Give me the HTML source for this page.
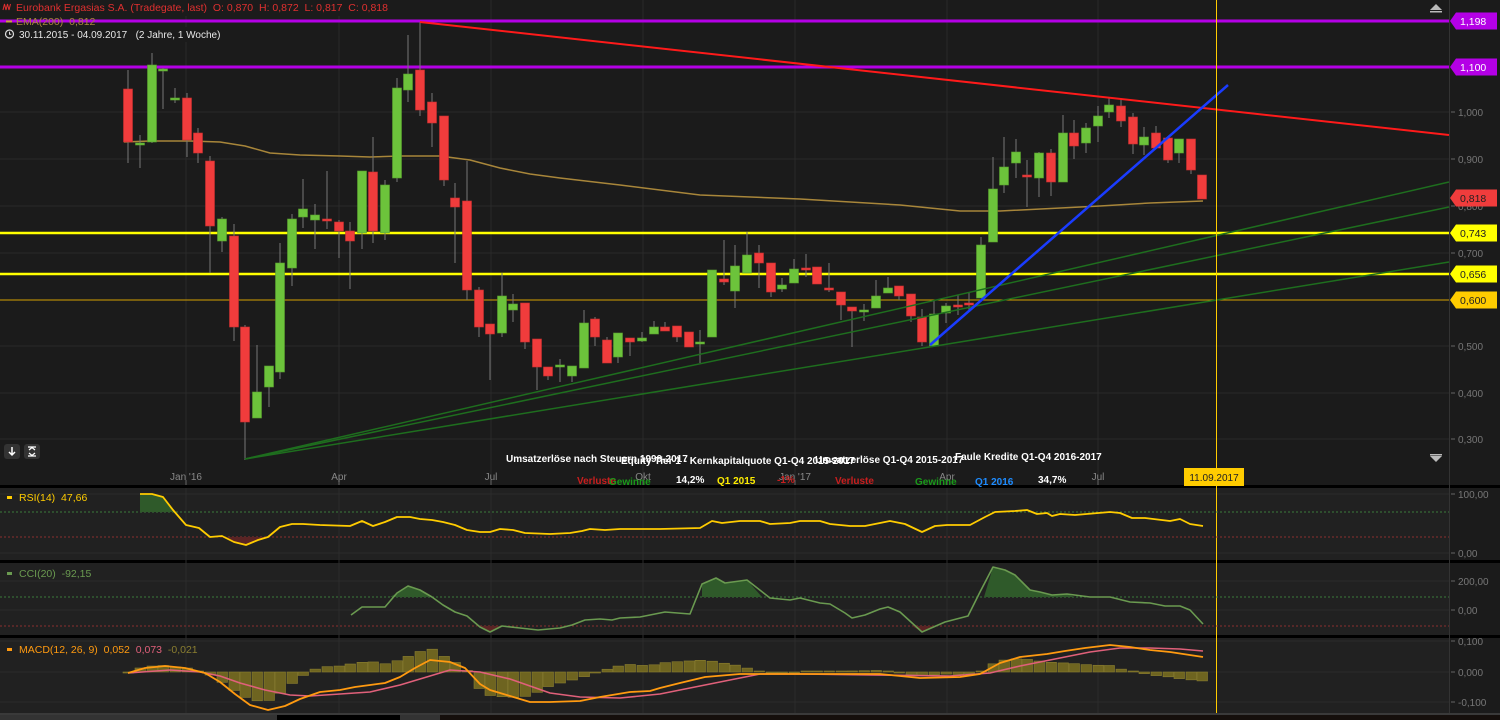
<!DOCTYPE html>
<html><head><meta charset="utf-8"><style>
html,body{margin:0;padding:0;background:#1b1b1b;width:1500px;height:720px;overflow:hidden}
svg{display:block}
text{font-family:"Liberation Sans",Arial,sans-serif}
</style></head><body>
<svg id="s" width="1500" height="720" xmlns="http://www.w3.org/2000/svg"></svg>
<script>
var o='';
function A(s){o+=s;}
function pl(pts,col,w,extra){A('<polyline fill="none" stroke="'+col+'" stroke-width="'+w+'" stroke-linejoin="round" '+(extra||'')+' points="'+pts.map(p=>p.join(',')).join(' ')+'"/>');}
function ln(x1,y1,x2,y2,c,w,e){A('<line x1="'+x1+'" y1="'+y1+'" x2="'+x2+'" y2="'+y2+'" stroke="'+c+'" stroke-width="'+w+'" '+(e||'')+'/>');}
function tx(x,y,t,c,sz,extra){A('<text x="'+x+'" y="'+y+'" fill="'+c+'" font-size="'+(sz||10)+'" '+(extra||'')+'>'+t+'</text>');}
A('<rect x="0" y="0" width="1500" height="720" fill="#1b1b1b"/>');
A('<rect x="0" y="488" width="1449" height="226" fill="#212121"/>');
A('<rect x="0" y="485" width="1500" height="3" fill="#000"/>');
A('<rect x="0" y="560" width="1500" height="3" fill="#000"/>');
A('<rect x="0" y="635" width="1500" height="3" fill="#000"/>');
A('<rect x="0" y="713" width="1500" height="2" fill="#3a3a3a"/>');
A('<rect x="0" y="715" width="277" height="5" fill="#333"/><rect x="277" y="715" width="123" height="5" fill="#000"/><rect x="400" y="715" width="40" height="5" fill="#333"/><rect x="440" y="715" width="1060" height="5" fill="#150f0c"/>');
A('<rect x="1449" y="0" width="1" height="713" fill="#333"/>');
[112,159,206,253,300,346,393,439].forEach(y=>ln(0,y,1449,y,'#2a2a2a',1));
[186,339,491,643,795,947,1098].forEach(x=>{ln(x,0,x,485,'#2a2a2a',1);ln(x,488,x,713,'#2c2c2c',1);ln(x,480,x,485,'#666',1);});
[494,553,581,610,641,672,702].forEach(y=>ln(0,y,1449,y,'#2c2c2c',1));
[['1,000',112],['0,900',159],['0,800',206],['0,700',253],['0,500',346],['0,400',393],['0,300',439]].forEach(a=>{ln(1451,a[1],1455,a[1],'#666',1);tx(1458,a[1]+4,a[0],'#777',10);});
[['100,00',494],['0,00',553],['200,00',581],['0,00',610],['0,100',641],['0,000',672],['-0,100',702]].forEach(a=>{ln(1451,a[1],1455,a[1],'#666',1);tx(1458,a[1]+4,a[0],'#777',10);});
[['Jan \'16',186],['Apr',339],['Jul',491],['Okt',643],['Jan \'17',795],['Apr',947],['Jul',1098]].forEach(a=>tx(a[1],480,a[0],'#888',10,'text-anchor="middle"'));
pl([[124,142],[150,141],[190,141],[220,142],[245,146],[270,153],[300,155],[340,156],[370,157],[400,156],[440,156],[470,160],[500,168],[530,174],[560,178],[620,185],[700,195],[800,199],[900,205],[960,211],[1000,211],[1100,206],[1150,203],[1203,201]],'#a8863a',1.5);
ln(0,21,1449,21,'#b400e6',3);ln(0,67,1449,67,'#b400e6',3);
ln(0,233,1449,233,'#ffff00',2.5);ln(0,274,1449,274,'#ffff00',2.5);ln(0,300,1449,300,'#d4a000',1);
var C=[[128,89,142,70,163],[140,143,143,135,168,1],[152,142,65,53,143],[163,69,69,68,109,1],[175,98,98,88,103],[187,98,140,93,157],[198,133,153,128,163],[210,161,226,156,273],[222,241,219,217,252],[234,236,327,224,341],[245,327,422,325,460],[257,418,392,345,418],[269,387,366,366,407],[280,372,263,243,379],[292,268,219,214,286],[303,217,209,179,228],[315,220,215,204,249],[327,219,221,171,229],[339,222,231,220,258],[350,231,241,222,289],[362,233,171,171,249],[373,172,231,137,243],[385,233,185,180,240],[397,178,88,78,182],[408,90,74,35,102],[420,70,110,22,116],[432,102,123,93,147],[444,116,180,116,186],[455,198,207,183,263],[467,201,290,161,300],[479,290,327,287,337],[490,324,334,324,380],[502,333,296,273,337],[513,310,304,294,322],[525,303,342,303,349],[537,339,367,339,390],[548,367,376,367,380],[560,365,365,359,382,1],[572,376,366,366,382],[584,368,323,310,368],[595,319,337,317,346],[607,340,363,337,363],[618,357,333,333,363],[630,338,342,338,356],[642,341,338,332,342],[654,334,327,321,334],[665,327,331,322,331],[677,326,337,326,342],[689,332,347,332,347],[700,342,342,330,363,1],[712,337,270,270,337],[724,279,282,240,285],[735,291,266,245,308],[747,273,255,232,273],[759,253,263,245,288],[771,263,292,263,297],[782,289,285,278,292],[794,283,269,259,283],[806,268,270,254,277],[817,267,284,267,284],[829,288,289,263,292],[841,292,305,292,320],[852,307,311,307,347],[864,310,310,304,321,1],[876,308,296,280,308],[888,293,288,277,293],[899,286,296,286,300],[911,294,316,294,322],[922,317,342,309,346],[934,346,314,301,346],[946,313,306,303,323],[958,305,307,295,315],[969,303,303,293,310,2],[981,298,245,237,298],[993,242,189,157,242],[1004,185,167,137,193],[1016,163,152,139,178],[1027,175,177,160,207],[1039,178,153,152,197],[1051,153,182,149,196],[1063,182,133,115,182],[1074,133,146,120,159],[1086,143,128,123,153],[1098,126,116,106,142],[1109,112,105,98,118],[1121,106,121,100,127],[1133,117,144,113,154],[1144,145,137,127,155],[1156,133,148,126,148],[1168,138,160,138,163],[1179,153,139,139,163],[1191,139,170,139,174],[1202,175,199,175,199]];
C.forEach(c=>{var x=c[0],op=c[1],cl=c[2],h=c[3],l=c[4];var up=cl<=op;if(c[5]==1)up=true;if(c[5]==2)up=false;
var col=up?'#6cc33b':'#f03c3c',bd=up?'#5aa030':'#c83030';
ln(x,h,x,l,'#777',1);var t=Math.min(op,cl),b=Math.max(op,cl);if(b-t<2){b=t+2;}
A('<rect x="'+(x-4.5)+'" y="'+t+'" width="9" height="'+(b-t)+'" fill="'+col+'" stroke="'+bd+'" stroke-width="0.6"/>');});
ln(420,22,1449,135,'#ff1a1a',2);
ln(245,459,1449,182,'#1e6e1e',1.5);ln(245,459,1449,207,'#1e6e1e',1.5);ln(245,459,1449,262,'#1e6e1e',1.5);
ln(930,345,1228,85,'#1a3cff',2.5);
ln(1216.5,0,1216.5,713,'#ffcc00',1);
A('<rect x="0" y="0" width="372" height="16" fill="#1b1b1b"/>');
A('<rect x="0" y="27" width="215" height="15" fill="#1b1b1b"/>');
A('<path d="M3 10 l1.5 -6 l1.5 6 l1.5 -6 l1.5 6 l1.5 -6" stroke="#e03030" fill="none" stroke-width="1"/>');
tx(16,11,'Eurobank Ergasias S.A. (Tradegate, last)  O: 0,870  H: 0,872  L: 0,817  C: 0,818','#e03030',10.5,'xml:space="preserve"');
A('<rect x="6" y="20.5" width="6" height="2" fill="#c8a040"/>');
tx(16,25,'EMA(200)  0,812','#a8863a',10.5,'xml:space="preserve"');
A('<circle cx="9.5" cy="34" r="4" fill="none" stroke="#ddd" stroke-width="1.2"/><path d="M9.5 31.8v2.4h1.8" stroke="#ddd" fill="none" stroke-width="1"/>');
tx(19,38,'30.11.2015 - 04.09.2017   (2 Jahre, 1 Woche)','#e8e8e8',10,'xml:space="preserve"');
function lab(y,bg,fg,t){A('<path d="M1450 '+y+' l6 -8.5 h41 v17 h-41 z" fill="'+bg+'"/>');tx(1460,y+4,t,fg,10.5);}
lab(21,'#b400e6','#fff','1,198');lab(67,'#b400e6','#fff','1,100');lab(198,'#f03c3c','#222','0,818');lab(233,'#ffff00','#222','0,743');lab(274,'#ffff00','#222','0,656');lab(300,'#ffcc00','#222','0,600');
A('<path d="M1430 10 l6 -6 l6 6 z" fill="#bbb"/><rect x="1430" y="11" width="12" height="1.5" fill="#bbb"/>');
A('<path d="M1430 456 l6 6 l6 -6 z" fill="#bbb"/><rect x="1430" y="454" width="12" height="1.5" fill="#bbb"/>');
A('<rect x="4" y="444" width="16" height="15" rx="3" fill="#333"/><path d="M12 447v8 M9 452l3 3 3-3" stroke="#fff" fill="none" stroke-width="1.5"/>');
A('<rect x="24" y="444" width="16" height="15" rx="3" fill="#333"/><path d="M28 447h8 M28 456h8 M29 450l3-2.5 3 2.5 M29 453l3 2.5 3-2.5" stroke="#fff" fill="none" stroke-width="1.2"/>');
tx(506,462,'Umsatzerlöse nach Steuern 1999-2017','#fff',10,'font-weight="bold"');
tx(621,464,'Equity Tier 1 - Kernkapitalquote Q1-Q4 2015-2017','#fff',10,'font-weight="bold"');
tx(815,463,'Umsatzerlöse Q1-Q4 2015-2017','#fff',10,'font-weight="bold"');
tx(955,460,'Faule Kredite Q1-Q4 2016-2017','#fff',10,'font-weight="bold"');
tx(577,484,'Verluste','#c81e1e',10,'font-weight="bold"');tx(609,485,'Gewinne','#1a9a1a',10,'font-weight="bold"');
tx(676,483,'14,2%','#fff',10,'font-weight="bold"');tx(717,484,'Q1 2015','#ffee00',10,'font-weight="bold"');
tx(777,483,'-1%','#c81e1e',10,'font-weight="bold"');tx(835,484,'Verluste','#c81e1e',10,'font-weight="bold"');
tx(915,485,'Gewinne','#1a9a1a',10,'font-weight="bold"');tx(975,485,'Q1 2016','#1e8cff',10,'font-weight="bold"');tx(1038,483,'34,7%','#fff',10,'font-weight="bold"');
A('<rect x="1184" y="468" width="60" height="18" fill="#ffcc00"/>');tx(1214,481,'11.09.2017','#222',10,'text-anchor="middle"');
ln(0,512,1449,512,'#3a7a3a',1,'stroke-dasharray="2,2"');ln(0,537,1449,537,'#8a3030',1,'stroke-dasharray="2,2"');
A('<path d="M140 494 L152 494 L163 497 L173 510 L173 512 L140 512 Z" fill="#2f5a2a"/>');
A('<path d="M222 537 L234 542 L246 545 L258 540 L268 537 Z" fill="#5a2424"/>');
pl([[140,494],[152,494],[163,497],[173,510],[186,525],[199,528],[210,537],[222,536],[234,542],[246,545],[258,540],[268,537],[280,527],[292,524],[303,524],[320,525],[350,526],[362,521],[373,526],[385,522],[397,517],[410,517],[420,519],[432,520],[443,522],[455,525],[467,530],[480,532],[490,532],[500,529],[513,530],[525,533],[550,534],[570,533],[582,531],[590,529],[605,530],[620,529],[640,529],[660,529],[700,528],[712,521],[722,523],[740,521],[760,521],[770,524],[790,523],[800,521],[820,521],[830,524],[850,526],[865,526],[880,523],[890,521],[905,524],[922,532],[935,526],[947,525],[970,525],[985,517],[995,512],[1015,511],[1027,510],[1037,514],[1047,513],[1052,516],[1060,514],[1075,515],[1110,512],[1120,513],[1132,518],[1145,518],[1170,521],[1180,519],[1190,524],[1203,526]],'#ffcc00',1.8);
A('<rect x="7" y="496" width="5" height="3" fill="#ffcc00"/>');tx(19,501,'RSI(14)  47,66','#ffcc00',10.5,'xml:space="preserve"');
ln(0,597,1449,597,'#3a7a3a',1,'stroke-dasharray="2,2"');ln(0,626,1449,626,'#8a3030',1,'stroke-dasharray="2,2"');
A('<path d="M390 597 L397 593 L408 586 L420 590 L432 597 Z" fill="#2f5a2a"/>');
A('<path d="M702 597 L702 584 L716 578 L725 583 L747 580 L762 597 Z" fill="#2f5a2a"/>');
A('<path d="M984 597 L993 567 L1005 570 L1015 575 L1030 590 L1040 592 L1052 595 L1067 594 L1075 597 Z" fill="#2f5a2a"/>');
A('<path d="M475 626 L480 627 L490 632 L502 626 Z M912 626 L922 632 L935 626 Z" fill="#5a2424"/>');
pl([[351,615],[362,607],[385,607],[397,593],[408,586],[420,590],[432,597],[443,605],[455,612],[467,616],[480,627],[490,632],[502,626],[520,628],[538,630],[560,628],[572,625],[585,620],[600,619],[612,620],[620,618],[640,617],[655,614],[665,612],[690,614],[702,584],[716,578],[725,583],[747,580],[770,598],[790,600],[800,598],[820,603],[830,604],[845,613],[852,618],[865,615],[880,609],[888,607],[900,612],[922,632],[945,622],[968,616],[980,592],[993,567],[1005,570],[1015,575],[1030,590],[1040,592],[1052,595],[1067,594],[1090,597],[1110,597],[1130,602],[1150,603],[1165,606],[1180,606],[1190,610],[1203,624]],'#6a9a50',1.6);
A('<rect x="7" y="572" width="5" height="3" fill="#6a9a50"/>');tx(19,577,'CCI(20)  -92,15','#6a9a50',10.5,'xml:space="preserve"');
var M=[[128,673],[145,668],[165,666],[185,668],[205,673],[220,682],[235,694],[250,705],[268,710],[285,706],[300,699],[320,692],[340,690],[355,687],[370,685],[385,683],[400,677],[415,668],[430,660],[450,662],[465,668],[480,684],[490,690],[510,696],[530,702],[550,702],[580,701],[600,697],[630,692],[650,691],[660,688],[680,683],[705,677],[740,674],[800,674],[880,674],[920,678],[960,677],[980,674],[1000,663],[1020,657],[1047,654],[1065,651],[1085,648],[1110,645],[1130,647],[1150,650],[1170,652],[1203,657]];
var S=[[128,673],[170,670],[200,672],[220,676],[240,683],[265,690],[290,695],[310,696],[340,694],[370,692],[400,685],[430,676],[450,670],[480,672],[510,679],[550,693],[580,697],[620,698],[660,694],[700,686],[760,674],[800,674],[950,676],[990,673],[1020,666],[1050,660],[1090,652],[1120,648],[1150,648],[1180,649],[1203,651]];
function itp(a,x){for(var i=0;i<a.length-1;i++){if(x>=a[i][0]&&x<=a[i+1][0]){var t=(x-a[i][0])/(a[i+1][0]-a[i][0]);return a[i][1]+t*(a[i+1][1]-a[i][1]);}}return a[a.length-1][1];}
C.forEach(c=>{var x=c[0];var d=(itp(M,x)-itp(S,x))*1.5;if(Math.abs(d)<1)d=d<0?-1:1;var t=Math.min(672,672+d),h=Math.abs(d);
A('<rect x="'+(x-5)+'" y="'+t+'" width="10.5" height="'+h+'" fill="#6e6420" stroke="#8a7e30" stroke-width="0.6"/>');});
pl(S,'#e0607a',1.6);pl(M,'#ff9a10',1.8);
A('<rect x="7" y="648" width="5" height="3" fill="#ff9a10"/>');tx(19,653,'MACD(12, 26, 9)  <tspan fill="#ff9a10">0,052</tspan>  <tspan fill="#e0607a">0,073</tspan>  <tspan fill="#8a7e30">-0,021</tspan>','#ff9a10',10.5,'xml:space="preserve"');
document.getElementById('s').innerHTML=o;
</script>
</body></html>
